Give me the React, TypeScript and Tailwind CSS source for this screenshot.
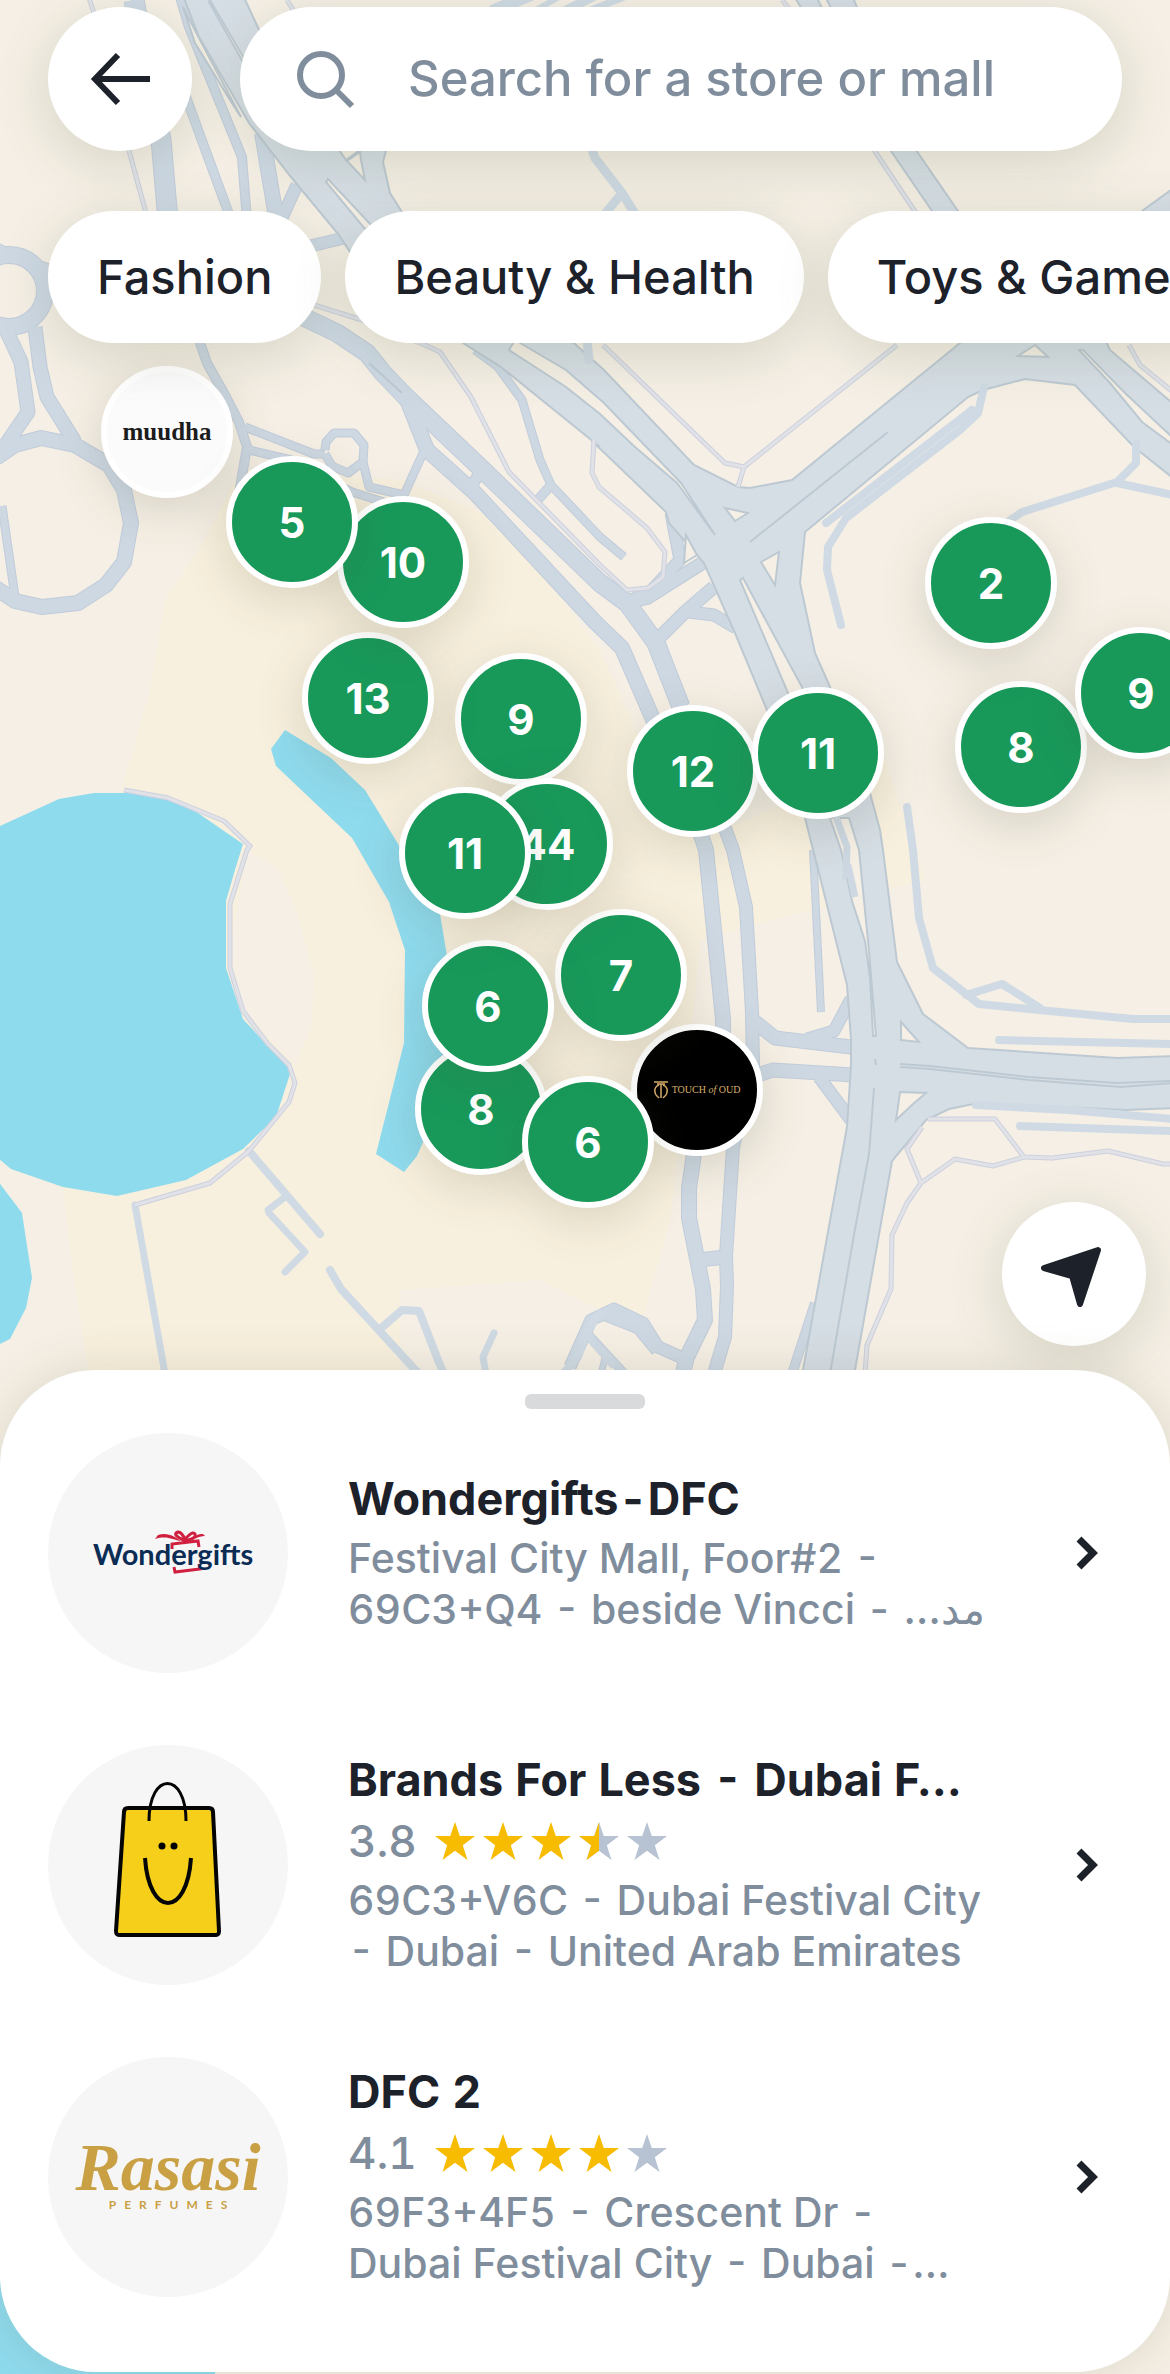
import type { ReactNode } from "react";

/* ---------- Map geometry ---------- */

type Pts = number[];
const MAP_W = 1170;
const MAP_H = 2374;

/* The map is digitised in six sheets; each sheet has its own origin and scale. */
const sheet = (ox: number, oy: number, sx: number, sy: number) => (...n: Pts) =>
  n.map((v, i) => Math.round(i % 2 ? oy + v / sy : ox + v / sx));
const A = sheet(0, 0, 2.613, 3);
const B = sheet(570, 0, 2.613, 3);
const C = sheet(0, 350, 2.613, 3);
const D = sheet(570, 350, 2.613, 3);
const E = sheet(0, 850, 2.613, 2.958);
const F = sheet(570, 850, 2.613, 2.958);
const join = (...parts: Pts[]) => parts.flat();
const path = (p: Pts, close = false) => {
  let d = "M";
  for (let i = 0; i < p.length; i += 2) d += `${i ? "L" : ""}${p[i]} ${p[i + 1]}`;
  return close ? d + "Z" : d;
};

const LAND = "#f5efe5";
const URBAN = "#f8f0de";
const WATER = "#8fdbee";
const STREET = "#cdd8e3";
const STREET_EDGE = "#c1ccda";
const HIGHWAY = "#d6dee5";
const HIGHWAY_EDGE = "#bdc9d2";
const TRAIL = "#e0e2e7";
const TRAIL_EDGE = "#cdd0de";

const urban: Pts[] = [
  [165, 600, 205, 540, 240, 470, 400, 480, 500, 520, 600, 650, 650, 760, 700, 840, 840, 780, 885, 760, 925, 880, 830, 905, 700, 940, 690, 1050, 670, 1220, 640, 1330, 540, 1280, 400, 1290, 400, 1374, 90, 1374, 60, 1230, 10, 1160, 10, 860, 110, 830, 150, 690],
];

const landPatches: Pts[] = [
  E(645, 0, 730, 60, 780, 200, 820, 370, 815, 520, 770, 640, 635, 470, 600, 300),
  E(-5, 910, 165, 1000, 190, 1250, 235, 1568, -5, 1568),
];

const water: Pts[] = [
  join(
    C(-5, 1430, 155, 1348, 245, 1328, 350, 1328, 440, 1348, 510, 1382, 635, 1482, 615, 1560),
    E(590, 150, 590, 350, 635, 500, 760, 655, 720, 790, 635, 885, 485, 977, 305, 1022, 165, 998, 30, 943, -5, 910),
  ),
  E(-5, 980, 58, 1075, 84, 1265, 68, 1355, 25, 1445, -5, 1465),
  join(
    C(745, 1140, 865, 1223, 955, 1320, 1045, 1490),
    E(1150, 190, 1172, 350, 1175, 600, 1105, 865, 1090, 905, 1055, 952, 982, 900, 1055, 570, 1057, 295, 1017, 155, 937, 0),
    C(920, 1465, 720, 1248, 708, 1198),
  ),
  [-5, 2180, 215, 2180, 215, 2380, -5, 2380],
];

/* [width, points] */
type Line = [number, Pts];

const streets: Line[] = [
  [14, A(15, 990, 55, 1085, 72, 1235, 0, 1360)],
  [14, join(A(92, 980, 105, 1100), C(122, 140, 195, 275))],
  [15, C(-10, 325, 40, 285, 108, 263, 195, 285, 285, 345, 325, 420, 341, 520, 325, 635, 277, 705, 203, 758, 110, 770, 40, 753, -10, 715)],
  [8, C(5, 468, 38, 740)],
  [9, A(-5, 745, 45, 775, 125, 805)],
  [9, join(A(520, 1020, 540, 1090, 590, 1190), C(625, 215, 645, 290, 625, 430))],
  [8, C(640, 230, 820, 312, 850, 312)],
  [8, C(848, 300, 852, 275, 872, 248, 925, 248, 952, 285, 948, 335, 910, 368, 868, 348, 848, 312)],
  [8, C(948, 335, 965, 412, 1055, 435, 1105, 310)],
  [8, C(650, 300, 760, 330, 920, 425, 1010, 460)],
  [20, A(350, 0, 385, 200, 420, 420, 440, 660)],
  [9, A(470, -10, 495, 80, 632, 470, 645, 660)],
  [9, A(485, 290, 600, 650)],
  [15, A(685, 400, 722, 650)],
  [12, A(735, 660, 775, 555)],
  [12, A(800, 740, 900, 715)],
  [18, join(A(770, 940, 880, 1000, 960, 1060), C(1000, 70, 1060, 140, 1270, 370, 1568, 700), D(150, 760, 225, 880, 290, 1070))],
  [15, join(C(1060, 140, 1115, 300, 1240, 430, 1555, 815), D(135, 895, 215, 1100))],
  [13, join(D(290, 1070, 400, 1420), F(425, 0, 460, 170, 475, 480, 478, 640, 425, 880, 408, 1200, 410, 1290, 405, 1440, 375, 1550))],
  [15, join(D(215, 1100, 345, 1465), F(355, 0, 400, 500, 400, 640, 325, 900, 310, 1000, 310, 1090, 348, 1300, 352, 1390, 305, 1500, 290, 1568))],
  [11, C(1225, 425, 1250, 375, 1280, 370)],
  [14, F(335, 1212, 408, 1205)],
  [8, join(A(1240, 1050), C(1300, 50, 1365, 150, 1410, 330, 1440, 405, 1568, 560), D(140, 622))],
  [9, C(1440, 405, 1400, 455)],
  [12, D(265, 490, 288, 630, 210, 725, 150, 755)],
  [13, D(350, 635, 200, 745, 155, 755)],
  [13, D(375, 710, 300, 785, 220, 880)],
  [12, D(310, 785, 375, 795, 435, 835)],
  [14, F(480, 505, 535, 555, 735, 582)],
  [14, F(490, 665, 530, 652, 740, 665)],
  [12, F(620, 560, 690, 535, 735, 440)],
  [12, F(650, 670, 735, 800)],
  [7, F(635, 0, 655, 480)],
  [9, F(640, 1340, 580, 1550)],
  [12, F(0, 1530, 55, 1390, 115, 1358, 190, 1400, 230, 1470, 300, 1505)],
  [14, F(95, 1372, 180, 1410, 230, 1480)],
  [8, F(45, 1430, 145, 1550)],
  [6, F(95, 1490, 80, 1550)],
];

const lanes: Line[] = [
  [8, join(D(880, 1370), F(895, 0, 912, 200, 948, 350, 1070, 457, 1225, 472, 1470, 500, 1575, 500))],
  [8, F(1035, 428, 1130, 395, 1228, 468)],
  [8, F(1120, 562, 1575, 574)],
  [8, F(1062, 755, 1300, 768, 1575, 795)],
  [8, F(1175, 817, 1575, 830)],
  [8, D(1082, 110, 1065, 190, 1020, 240, 720, 505, 675, 590, 672, 660, 708, 825)],
  [8, D(1050, 180, 670, 520)],
  [8, D(1478, 280, 1478, 340, 1430, 397, 1180, 485, 1140, 520)],
  [8, D(1430, 400, 1575, 435)],
  [9, B(55, 440, 65, 475, 135, 580, 175, 650)],
  [9, B(135, 580, 90, 645)],
  [9, B(45, 1020, 50, 1080)],
  [7, E(352, 1050, 430, 1550)],
  [8, E(650, 890, 835, 1135)],
  [7, E(745, 1025, 700, 1065, 702, 1075, 798, 1190, 745, 1248)],
  [8, E(862, 1242, 890, 1300, 1095, 1550)],
  [8, E(990, 1420, 1050, 1360, 1095, 1365, 1145, 1510, 1160, 1550)],
  [7, E(1292, 1430, 1262, 1500, 1270, 1550)],
  [8, E(1568, 1370, 1530, 1430, 1510, 1500, 1470, 1550)],
  [8, E(1535, 1435, 1600, 1520)],
  [9, B(-10, 30, 60, -10)],
  [7, B(55, 30, 140, -10)],
  [12, A(1290, 30, 1400, -20)],
  [6, A(1400, 30, 1480, -20)],
];

const trails: Pts[] = [
  join(
    E(352, 1050, 550, 985, 650, 890, 755, 745, 772, 690, 755, 635, 700, 575, 635, 475, 600, 350, 600, 160, 645, 0),
    C(652, 1488, 585, 1412, 440, 1343, 325, 1320),
  ),
  A(335, 440, 385, 650),
  A(232, -5, 245, 40),
  A(750, 0, 770, 40),
  B(555, 0, 575, 30),
  B(795, 450, 905, 640),
  join(A(820, 915, 945, 960, 1110, 1035, 1150, 1055, 1230, 1190), C(1330, 365, 1568, 645), D(148, 720, 205, 715, 243, 680, 248, 605, 200, 535, 75, 410, 58, 370, 62, 270)),
  D(85, -15, 405, 340, 455, 352, 855, -15),
  D(455, 352, 440, 412),
  D(1460, -15, 1490, 45, 1575, 125),
  F(935, 795, 1110, 795, 1185, 907, 1260, 912, 1405, 890, 1550, 930, 1575, 930),
  F(1185, 907, 1105, 935, 1005, 915, 918, 985, 880, 1045, 842, 1140, 838, 1300, 775, 1465, 772, 1550),
  F(920, 820, 880, 885, 918, 985),
];

const highways: Pts[] = [
  join(
    A(475, -20, 520, 110, 650, 370, 760, 530, 885, 705, 920, 765, 1210, 1030),
    C(1310, 50, 1568, 290),
    D(55, 270, 250, 485, 258, 520, 350, 640, 430, 850, 515, 1080, 615, 1405, 650, 1568),
    F(725, 400, 735, 560, 735, 640, 723, 820, 610, 1538, 600, 1590, 738, 1590, 745, 1538, 842, 920, 930, 800, 990, 765, 1065, 748, 1450, 768, 1590, 762, 1590, 610, 1430, 615, 1040, 585, 922, 485, 855, 330, 818, 0),
    D(810, 1440, 785, 1330, 680, 1010, 640, 910, 600, 700, 615, 545, 1040, 140, 1080, 120, 1190, 87, 1320, 105, 1475, 290, 1590, 395, 1590, 175, 1410, 0),
    B(1390, 1000, 1590, 800, 1590, 555, 1495, 633, 1250, 870, 1015, 633, 905, 450, 735, -20, 580, -20, 840, 453, 945, 633, 1060, 860, 1060, 990, 1020, 1030),
    D(580, 390, 470, 413, 440, 410, 325, 345, 90, 60, 10, -20),
    A(1480, 1020, 1200, 800, 1050, 635, 1020, 580, 1000, 485, 1010, 440, 950, 440, 905, 480, 680, 95, 632, -20),
  ),
];

/* Ground that shows between carriageways. */
const islands: Pts[] = [
  A(478, 20, 490, 50, 545, 170, 630, 350, 600, 300, 510, 130),
  A(545, 5, 550, 0, 640, 180, 635, 185),
  A(908, 484, 940, 455, 942, 480, 955, 540),
  A(852, 545, 858, 537, 975, 680, 955, 688),
  join(C(1330, 0, 1480, 110, 1568, 192), D(170, 290, 280, 400, 378, 555, 290, 400, 90, 158), C(1480, 60, 1345, -30)),
  D(405, 475, 465, 488, 430, 512),
  D(302, 555, 332, 615, 298, 640),
  D(500, 635, 545, 605, 535, 705),
  D(443, 690, 453, 684, 605, 1010, 660, 1300, 620, 1160, 570, 1030),
  join(D(680, 1405, 730, 1405), F(755, 0, 782, 300, 800, 550, 793, 550, 783, 380, 770, 270, 738, 150, 708, 0)),
  F(865, 508, 912, 568, 865, 562),
  F(862, 715, 930, 720, 895, 750, 852, 798),
  B(1215, 1035, 1170, 1068, 1250, 1070),
  D(1330, 0, 1340, 0, 1450, 130, 1575, 265, 1575, 285, 1495, 215, 1410, 100),
  B(645, -5, 670, -5, 685, 30, 660, 30),
];

const seams: Pts[] = [
  D(830, 245, 470, 575),
  F(862, 632, 940, 638, 1200, 672, 1430, 690, 1575, 684),
  F(862, 642, 940, 648, 1200, 680, 1440, 700, 1575, 690),
  F(795, 705, 780, 900, 745, 1120, 680, 1550),
  F(798, 618, 799, 636),
  C(965, 40, 1050, 130),
];

function MapDrawing() {
  return (
    <svg viewBox={`0 0 ${MAP_W} ${MAP_H}`} className="absolute inset-0 h-full w-full" aria-hidden="true">
      <rect width={MAP_W} height={MAP_H} fill={LAND} />
      <g fill={URBAN}>{urban.map((p, i) => <path key={i} d={path(p, true)} />)}</g>
      <g fill={LAND}>{landPatches.map((p, i) => <path key={i} d={path(p, true)} />)}</g>
      <g fill={WATER}>{water.map((p, i) => <path key={i} d={path(p, true)} />)}</g>
      <g fill="none" strokeLinejoin="round">
        <g stroke={STREET_EDGE}>
          {streets.map(([w, p], i) => <path key={i} d={path(p)} strokeWidth={w + 1} />)}
          <circle cx="9" cy="291" r="36" strokeWidth="18" />
        </g>
        <g stroke={STREET}>
          {streets.map(([w, p], i) => <path key={i} d={path(p)} strokeWidth={w - 1} />)}
          <circle cx="9" cy="291" r="36" strokeWidth="16" />
        </g>
      </g>
      <g fill={HIGHWAY} stroke={HIGHWAY_EDGE} strokeWidth="2">
        {highways.map((p, i) => <path key={i} d={path(p, true)} />)}
      </g>
      <g fill={LAND} stroke={HIGHWAY_EDGE} strokeWidth="2">
        {islands.map((p, i) => <path key={i} d={path(p, true)} />)}
      </g>
      <g fill="none" stroke={HIGHWAY_EDGE} strokeWidth="2">
        {seams.map((p, i) => <path key={i} d={path(p)} />)}
      </g>
      <path
        d={path(join(D(695, 1400, 725, 1490, 722, 1568), F(730, 60, 745, 140)))}
        fill="none"
        stroke={STREET}
        strokeWidth="7"
      />
      <g fill="none" stroke="#cfdae4" strokeLinecap="round" strokeLinejoin="round">
        {lanes.map(([w, p], i) => <path key={i} d={path(p)} strokeWidth={w} />)}
      </g>
      <g fill="none" strokeLinejoin="round">
        {trails.map((p, i) => <path key={i} d={path(p)} stroke={TRAIL_EDGE} strokeWidth="5" />)}
        {trails.map((p, i) => <path key={i} d={path(p)} stroke={TRAIL} strokeWidth="3" />)}
      </g>
    </svg>
  );
}

/* ---------- Pins ---------- */

type Pin = { x: number; y: number; count?: number; brand?: "muudha" | "oud" };

const pins: Pin[] = [
  { x: 167, y: 432, brand: "muudha" },
  { x: 697, y: 1090, brand: "oud" },
  { x: 481, y: 1109, count: 8 },
  { x: 588, y: 1142, count: 6 },
  { x: 621, y: 975, count: 7 },
  { x: 488, y: 1006, count: 6 },
  { x: 521, y: 719, count: 9 },
  { x: 547, y: 844, count: 44 },
  { x: 465, y: 853, count: 11 },
  { x: 693, y: 771, count: 12 },
  { x: 818, y: 753, count: 11 },
  { x: 1021, y: 747, count: 8 },
  { x: 1141, y: 693, count: 9 },
  { x: 991, y: 583, count: 2 },
  { x: 368, y: 698, count: 13 },
  { x: 403, y: 562, count: 10 },
  { x: 292, y: 522, count: 5 },
];

function OudLogo() {
  return (
    <span className="flex items-center gap-1 text-[#d9ae6b]">
      <svg width="14" height="18" viewBox="0 0 14 18" fill="none" stroke="currentColor" strokeWidth="1.5">
        <path d="M0 1h14M3 3h8M7 3v14M5 4C1 5 0 9 1.500 13c1 2 3 3 3.500 4M9 4c4 1 5 5 3.500 9-1 2-3 3-3.500 4" />
      </svg>
      <span className="font-['Liberation_Serif',serif] text-[10px] leading-none font-normal whitespace-nowrap">
        TOUCH <i>of</i> OUD
      </span>
    </span>
  );
}

function MapPin({ pin }: { pin: Pin }) {
  const place = { left: `${(pin.x / MAP_W) * 100}%`, top: `${(pin.y / MAP_H) * 100}%` };
  const base =
    "absolute flex size-[132px] -translate-x-1/2 -translate-y-1/2 items-center justify-center rounded-full border-6 border-white shadow-[0_12px_48px_rgba(80,80,50,0.18)]";
  if (pin.brand === "muudha")
    return (
      <button style={place} className={`${base} bg-[#fbfbfc] font-['Liberation_Serif',serif] text-[25px] font-bold text-[#1c1c1c]`}>
        muudha
      </button>
    );
  if (pin.brand === "oud")
    return (
      <button style={place} className={`${base} bg-black`}>
        <OudLogo />
      </button>
    );
  return (
    <button style={place} className={`${base} bg-[#18995a] text-[42px] font-bold text-white`}>
      {pin.count}
    </button>
  );
}

/* ---------- Store logos ---------- */

function WondergiftsLogo() {
  return (
    <svg viewBox="0 0 240 240" className="size-full" role="img" aria-label="Wondergifts">
      <g fill="none" stroke="#d01f3f" strokeWidth="3">
        <path d="M124 116 124 111 150 108 151 114" />
        <path d="M126 134 127 139 152 136 151 131" />
        <path d="M137 108c-3-2-11-5-9-8 4-3 8 3 9 7 2-4 8-9 10-6 2 4-6 6-10 7" />
      </g>
      <g fill="#d01f3f">
        <path d="M133 108c-8-1-14-6-26-2l3-4c10-3 17 2 23 6Z" />
        <path d="M140 107c8 0 9-4 17-4l-2-2c-7-1-9 5-15 6Z" />
      </g>
      <text x="45" y="132" fill="#0a2c55" className="font-['Lato',sans-serif] text-[29px] font-bold">
        Wondergifts
      </text>
    </svg>
  );
}

function BagLogo() {
  return (
    <svg viewBox="0 0 240 240" className="size-full" role="img" aria-label="Brands For Less">
      <path
        d="M80 63h81c3 0 4 2 4 4l6 119c0 3-1 4-4 4H72c-3 0-4-1-4-4l8-119c0-2 1-4 4-4Z"
        fill="#f6cf1b"
        stroke="#050505"
        strokeWidth="4"
      />
      <g fill="none" stroke="#050505" strokeWidth="3">
        <path d="M101 76c0-50 37-50 37 0" />
        <path d="M97 113c4 60 42 60 46 0" strokeWidth="4" />
      </g>
      <circle cx="114" cy="101" r="3.500" />
      <circle cx="126" cy="101" r="3.500" />
    </svg>
  );
}

function RasasiLogo() {
  return (
    <span className="flex flex-col items-center text-[#c9a044]">
      <span className="font-['Liberation_Serif',serif] text-[68px] leading-[56px] font-bold italic">Rasasi</span>
      <span className="pl-2 font-['Lato',sans-serif] text-[12px] leading-[20px] font-bold tracking-[8px]">PERFUMES</span>
    </span>
  );
}

/* ---------- Store list ---------- */

const STAR = "M20 0 24.800 14H40L27.800 23.200 32.500 38 20 28.800 7.500 38 12.200 23.200 0 14H15.200Z";
const HALF_STAR = "M20 0V28.800L7.500 38 12.200 23.200 0 14H15.200Z";

function Stars({ value }: { value: number }) {
  const halves = Math.floor(value * 2);
  return (
    <span className="flex gap-2" role="img" aria-label={`${value} out of 5`}>
      {[0, 1, 2, 3, 4].map((i) => {
        const part = halves - i * 2;
        return (
          <svg key={i} width="40" height="38" viewBox="0 0 40 38">
            <path d={STAR} fill={part >= 2 ? "#f7bc00" : "#b7c2d2"} />
            {part === 1 && <path d={HALF_STAR} fill="#f7bc00" />}
          </svg>
        );
      })}
    </span>
  );
}

type Store = { name: string; rating?: number; address: [string, string]; logo: ReactNode };

const stores: Store[] = [
  {
    name: "Wondergifts-DFC",
    address: ["Festival City Mall, Foor#2 -", "69C3+Q4 - beside Vincci - …مد"],
    logo: <WondergiftsLogo />,
  },
  {
    name: "Brands For Less - Dubai F…",
    rating: 3.8,
    address: ["69C3+V6C - Dubai Festival City", "- Dubai - United Arab Emirates"],
    logo: <BagLogo />,
  },
  {
    name: "DFC 2",
    rating: 4.1,
    address: ["69F3+4F5 - Crescent Dr -", "Dubai Festival City - Dubai -…"],
    logo: <RasasiLogo />,
  },
];

function StoreRow({ store }: { store: Store }) {
  return (
    <a href="#" className="flex items-center gap-[60px]">
      <span className="flex size-60 shrink-0 items-center justify-center rounded-full bg-[#f6f6f6]">{store.logo}</span>
      <span className="flex min-w-0 grow flex-col gap-[7px] font-medium whitespace-nowrap text-[#808d9c] tabular-nums">
        <span className="text-[45px] leading-[54px] font-bold text-[#1c212a]">{store.name}</span>
        {store.rating && (
          <span className="flex items-center text-[44px] leading-[54px]">
            <span className="w-[87px]">{store.rating}</span>
            <Stars value={store.rating} />
          </span>
        )}
        <span className="text-[41px] leading-[51px]">
          {store.address.map((line) => (
            <span key={line} className="block">{line}</span>
          ))}
        </span>
      </span>
      <svg width="24" height="36" viewBox="0 0 24 36" fill="none" stroke="#1c212a" strokeWidth="7" className="shrink-0">
        <path d="M4 4 18 18 4 32" />
      </svg>
    </a>
  );
}

/* ---------- Page ---------- */

const floating = "bg-white shadow-[0_12px_54px_rgba(90,105,70,0.2)]";

export default function App() {
  return (
    <main className="relative flex min-h-screen flex-col overflow-hidden bg-[#f5efe5] font-['Inter',sans-serif]">
      <div className="absolute inset-x-0 top-0 aspect-[1170/2374]">
        <MapDrawing />
        {pins.map((pin) => (
          <MapPin key={`${pin.x}-${pin.y}`} pin={pin} />
        ))}
      </div>

      <header className="relative flex gap-12 px-12 pt-[7px]">
        <button aria-label="Back" className={`flex size-36 shrink-0 items-center justify-center rounded-full ${floating}`}>
          <svg width="60" height="60" viewBox="0 0 60 60" fill="none" stroke="#1c212a" strokeWidth="6">
            <path d="M60 30H4M28 6 5 30 28 54" />
          </svg>
        </button>
        <div className={`flex h-36 min-w-0 grow items-center gap-13 rounded-full pr-12 pl-14 ${floating}`}>
          <svg width="60" height="60" viewBox="0 0 60 60" fill="none" stroke="#808d9c" strokeWidth="6" className="shrink-0">
            <circle cx="25" cy="26" r="21" />
            <path d="M40 41 56 57" />
          </svg>
          <input
            type="text"
            aria-label="Search for a store or mall"
            placeholder="Search for a store or mall"
            className="min-w-0 grow text-[49px] leading-[60px] text-[#1c212a] outline-none placeholder:font-medium placeholder:text-[#808d9c]"
          />
        </div>
      </header>

      <nav className="relative mt-[60px] flex gap-6 pl-12">
        {["Fashion", "Beauty & Health", "Toys & Games"].map((label) => (
          <button
            key={label}
            className={`h-[132px] shrink-0 rounded-full px-[49px] text-[47px] font-medium whitespace-nowrap text-[#1c212a] ${floating}`}
          >
            {label}
          </button>
        ))}
      </nav>

      <div className="relative mt-auto flex justify-end p-6">
        <button aria-label="My location" className={`flex size-36 items-center justify-center rounded-full ${floating}`}>
          <svg width="72" height="72" viewBox="0 0 72 72" fill="#1c212a" stroke="#1c212a" strokeWidth="6" strokeLinejoin="round">
            <path d="M60 12 6 30 34 38 42 66Z" />
          </svg>
        </button>
      </div>

      <section className="relative mb-0.5 flex flex-col items-center rounded-[96px] bg-white pt-6 pb-[75px] shadow-[0_0_48px_rgba(80,80,50,0.15)]">
        <span className="h-[15px] w-[120px] rounded-md bg-[#d9dadc]" />
        <div className="mt-6 flex w-full flex-col gap-[72px] pr-[71px] pl-12">
          {stores.map((store) => (
            <StoreRow key={store.name} store={store} />
          ))}
        </div>
      </section>
    </main>
  );
}
